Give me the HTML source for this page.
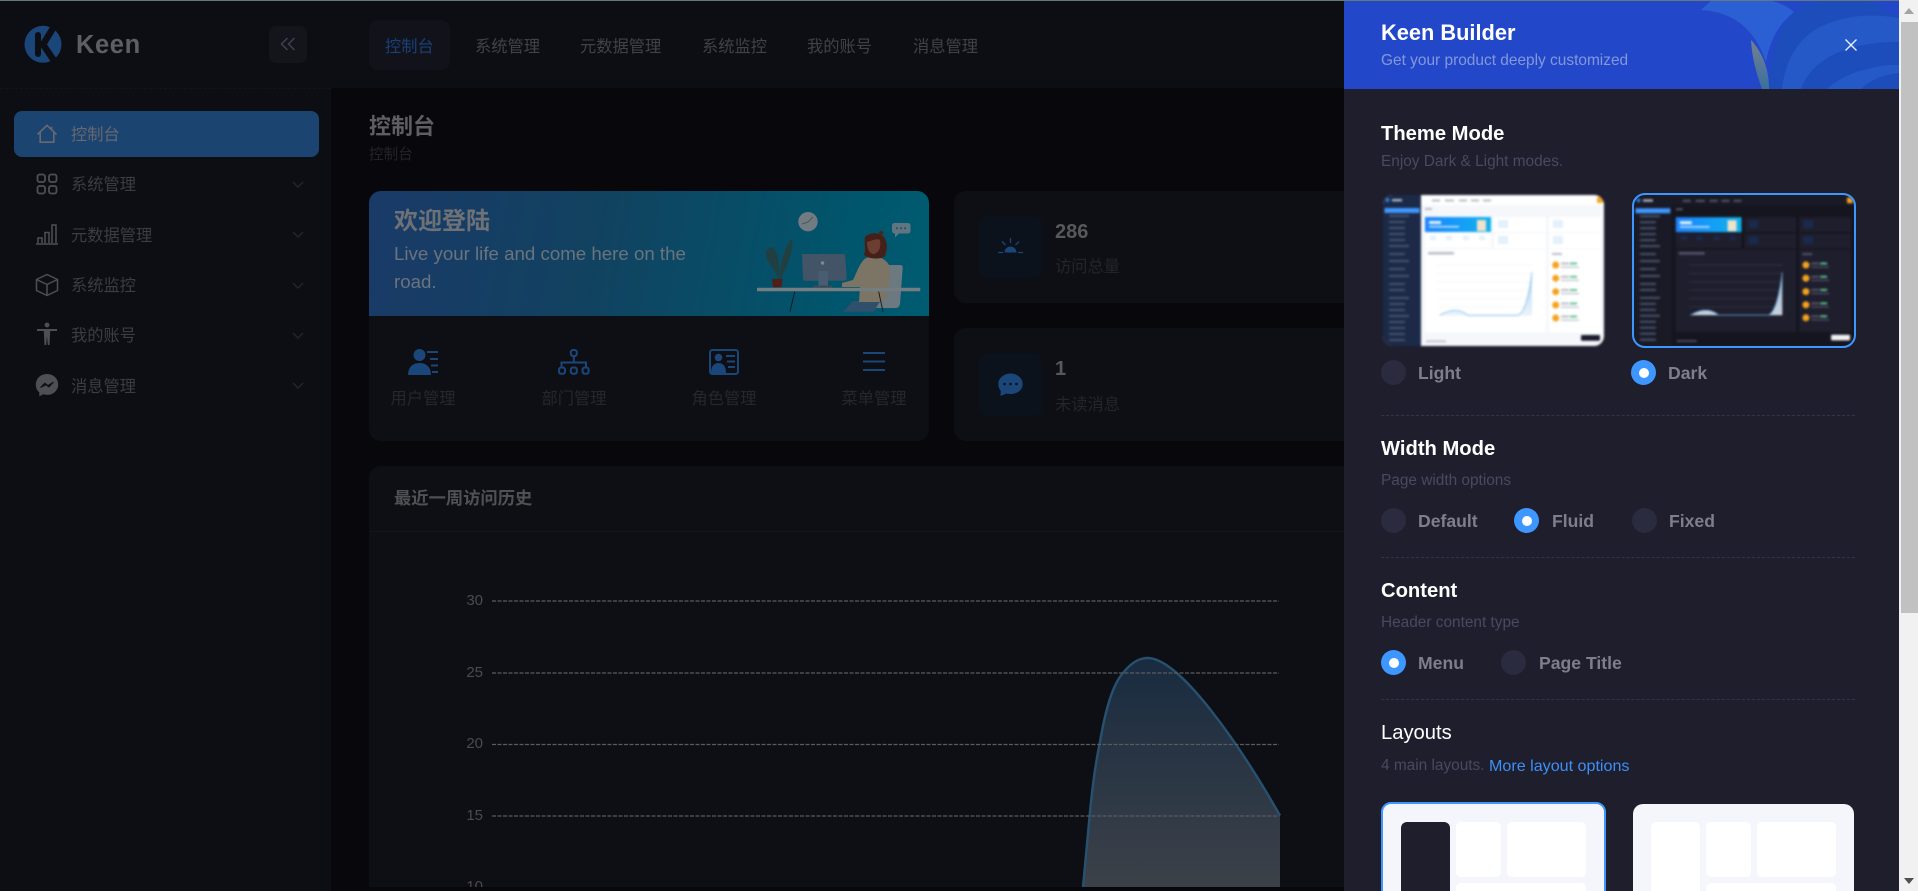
<!DOCTYPE html>
<html lang="zh">
<head>
<meta charset="utf-8">
<title>Keen</title>
<style>
html,body{margin:0;padding:0;width:1918px;height:891px;overflow:hidden;background:#08080c;font-family:"Liberation Sans","Noto Sans CJK SC",sans-serif}
#p{position:absolute;left:0;top:0;width:1918px;height:891px;overflow:hidden}
.b{position:absolute}
.t{position:absolute;white-space:nowrap;line-height:20px;height:20px}
.nav{font-size:16.25px;color:#414246}
.side{font-size:16.25px;color:#3c3d43;left:71px}
.q{font-size:16.25px;color:#26272e;width:100px;text-align:center}
.h{font-size:20.2px;font-weight:700;color:#fff;left:1381px}
.s{font-size:15.4px;color:#494960;left:1381px}
.l{font-size:17.6px;font-weight:700;color:#7f7f8c}
.r{position:absolute;width:25px;height:25px;border-radius:50%;background:#2b2b40}
.r.on{background:#3e97ff}
.r.on:after{content:"";position:absolute;left:7.5px;top:7.5px;width:10px;height:10px;border-radius:50%;background:#fff}
.dv{position:absolute;left:1381px;width:474px;height:0;border-top:1px dashed #33334a}
svg{position:absolute;display:block;overflow:visible}
.thumb{filter:blur(1px)}
</style>
</head>
<body>
<div id="p">
<!-- main bg -->
<div class="b" style="left:331px;top:0;width:1013px;height:891px;background:#08080c"></div>
<!-- sidebar -->
<div class="b" style="left:0;top:0;width:331px;height:891px;background:#0c0e13"></div>
<!-- header -->
<div class="b" style="left:0;top:0;width:1344px;height:88px;background:#0d0e13"></div>
<div class="b" style="left:0;top:88px;width:331px;height:0;border-top:1px dashed #14151a"></div>
<!-- top hairline -->
<div class="b" style="left:0;top:0;width:1918px;height:1px;background:#66787c;z-index:9"></div>

<!-- logo -->
<svg style="left:0;top:0" width="120" height="88" viewBox="0 0 120 88">
<circle cx="43" cy="44.3" r="18.5" fill="#1a4679"/>
<path d="M38 35V54" stroke="#0d0e13" stroke-width="6" stroke-linecap="round"/>
<path d="M55 25L43 44.5L57 65" stroke="#0d0e13" stroke-width="6.5" fill="none" stroke-linejoin="round"/>
</svg>
<div class="t" style="left:76px;top:30px;height:30px;line-height:30px;font-size:25.5px;font-weight:700;color:#5f5f63;letter-spacing:.6px">Keen</div>
<!-- toggle -->
<div class="b" style="left:269px;top:26px;width:38px;height:37px;border-radius:7px;background:#14141b"></div>
<svg style="left:280px;top:36px" width="16" height="16" viewBox="0 0 16 16" fill="none" stroke="#3f4052" stroke-width="1.5"><path d="M7.5 2L1.5 8L7.5 14M14.5 2L8.5 8L14.5 14"/></svg>

<!-- top nav -->
<div class="b" style="left:369px;top:20px;width:81px;height:50px;border-radius:9px;background:#12121a"></div>
<div class="t nav" style="left:385px;top:37px;color:#194078">控制台</div>
<div class="t nav" style="left:475px;top:37px">系统管理</div>
<div class="t nav" style="left:580px;top:37px">元数据管理</div>
<div class="t nav" style="left:702px;top:37px">系统监控</div>
<div class="t nav" style="left:807px;top:37px">我的账号</div>
<div class="t nav" style="left:913px;top:37px">消息管理</div>

<!-- sidebar menu -->
<div class="b" style="left:14px;top:111px;width:305px;height:46px;border-radius:8px;background:#1b4470"></div>
<svg style="left:36px;top:124px" width="22" height="20" viewBox="0 0 24 22" fill="none" stroke="#666a70" stroke-width="1.8"><path d="M1.5 11.5L12 1.5L22.5 11.5M4.5 9.5V20H19.5V9.5M17 3V6.5"/></svg>
<div class="t side" style="top:125px;color:#666970">控制台</div>

<svg style="left:36px;top:173px" width="22" height="22" viewBox="0 0 22 22" fill="none" stroke="#4e4f55" stroke-width="1.8"><rect x="1.5" y="1.5" width="7.5" height="7.5" rx="2"/><rect x="13" y="1.5" width="7.5" height="7.5" rx="2"/><rect x="1.5" y="13" width="7.5" height="7.5" rx="2"/><rect x="13" y="13" width="7.5" height="7.5" rx="2"/></svg>
<div class="t side" style="top:175px">系统管理</div>

<svg style="left:35px;top:223px" width="24" height="22" viewBox="0 0 24 22" fill="none" stroke="#4e4f55" stroke-width="1.5"><path d="M1 21H23M3 20V15H7V20M10 20V9.5H14V20M17 20V2H21V20"/></svg>
<div class="t side" style="top:226px">元数据管理</div>

<svg style="left:35px;top:273px" width="24" height="24" viewBox="0 0 24 24" fill="none" stroke="#4e4f55" stroke-width="1.5" stroke-linejoin="round"><path d="M12 1.5L22.5 6.5V17.5L12 22.5L1.5 17.5V6.5ZM1.5 6.5L12 11.5L22.5 6.5M12 11.5V22.5"/></svg>
<div class="t side" style="top:276px">系统监控</div>

<svg style="left:36px;top:322px" width="22" height="24" viewBox="0 0 22 24"><circle cx="11" cy="3" r="2.4" fill="#4e4f55"/><path d="M1 7H21V9H14.2L13.5 23H11.8L11 14L10.2 23H8.5L7.8 9H1Z" fill="#4e4f55"/></svg>
<div class="t side" style="top:326px">我的账号</div>

<svg style="left:35px;top:373px" width="24" height="24" viewBox="0 0 24 24"><path d="M12 1C5.6 1 .8 5.6.8 11.6c0 3.2 1.3 5.9 3.5 7.8V23.4l3.7-2.1c1.2.4 2.6.6 4 .6 6.4 0 11.2-4.6 11.2-10.3C23.2 5.6 18.4 1 12 1Z" fill="#4e4f55"/><path d="M5.5 14.5L9.8 10.2L13 12.5L18.5 9L14 14L10.8 11.8Z" fill="#101117" stroke="#101117"/></svg>
<div class="t side" style="top:377px">消息管理</div>

<svg style="left:0;top:0;width:331px;height:420px" width="331" height="420" fill="none" stroke="#23252f" stroke-width="1.4"><path d="M293 182l5 5l5-5M293 232l5 5l5-5M293 283l5 5l5-5M293 333l5 5l5-5M293 383l5 5l5-5"/></svg>

<!-- page title -->
<div class="t" style="left:369px;top:117px;font-size:22px;font-weight:700;color:#5f5f63">控制台</div>
<div class="t" style="left:369px;top:145px;font-size:14.6px;color:#23232b">控制台</div>

<!-- welcome card -->
<div class="b" style="left:369px;top:191px;width:560px;height:250px;border-radius:12px;background:#0e0f14"></div>
<div class="b" style="left:369px;top:191px;width:560px;height:125px;border-radius:12px 12px 0 0;background:linear-gradient(100deg,#1a3a68 0%,#114260 40%,#00566c 85%,#005c71 100%)"></div>
<div class="t" style="left:394px;top:212px;font-size:24px;font-weight:700;color:#6e7276">欢迎登陆</div>
<div class="t" style="left:394px;top:240px;height:28px;line-height:28px;font-size:18.7px;color:#6a747e">Live your life and come here on the</div>
<div class="t" style="left:394px;top:268px;height:28px;line-height:28px;font-size:18.7px;color:#6a747e">road.</div>

<!-- illustration -->
<svg style="left:0;top:0" width="1" height="1" viewBox="0 0 1 1">
<circle cx="808" cy="221.7" r="9.7" fill="#717b81"/>
<path d="M808 222L813 217M808 222L802 224" stroke="#3f4c52" stroke-width=".8" fill="none"/>
<path d="M895 223H908a2.5 2.5 0 0 1 2.5 2.5V231a2.5 2.5 0 0 1-2.5 2.5H899L895 237.5V233.5a3 3 0 0 1-3-2.5V225.5A2.5 2.5 0 0 1 895 223Z" fill="#5f7682"/>
<circle cx="897" cy="228.3" r="1" fill="#2f4653"/><circle cx="901" cy="228.3" r="1" fill="#2f4653"/><circle cx="905" cy="228.3" r="1" fill="#2f4653"/>
<path d="M779 280C776 270 766 262 766 254C766 247 772 245 775 250C779 256 780 268 779 280Z" fill="#213f41"/>
<path d="M780 280C779 268 783 252 790 240C792 238 793 242 792 247C791 258 786 268 780 280Z" fill="#213f41"/>
<path d="M772 278.7H782.7L781.5 287.3H773Z" fill="#502018"/>
<path d="M802 254H843Q845 254 845.2 256L846.7 278Q846.7 280.7 844 280.7H805Q803 280.7 803 278Z" fill="#435466"/>
<circle cx="822.5" cy="263" r="1.7" fill="#81888d"/>
<path d="M818.5 271H828V286.5H818.5Z" fill="#4a5c6f"/>
<path d="M813 285.5H832V287.7H813Z" fill="#394a5b"/>
<path d="M889 265H900Q903 265 902.7 268L900 304Q899 308 896 308H870L884 300Z" fill="#6d7980"/>
<path d="M843 311.7L853 301H880L874 311.7Z" fill="#2f4f6b"/>
<path d="M866 258C860 262 857 272 853 280L842 283V287H860L859 302H884C890 290 891 272 889 265C886 259 878 256 872 256Z" fill="#7c7464"/>
<path d="M865 237C871 231 884 232 886 241C888 248 886 252 885 256C881 260 868 259 864 255C866 250 864 245 865 237Z" fill="#452019"/>
<circle cx="881" cy="233" r="2.2" fill="#4f221a"/>
<path d="M867 242C871 241 877 238 880 240C881 246 880 252 874 254C869 254 867 248 867 242Z" fill="#6c3e32"/>
<path d="M757 287.7H920.3V291.3H757Z" fill="#747d81"/>
<path d="M794.7 291.7L790 311.7M878.7 291.7L883 311.7" stroke="#0c161c" stroke-width=".9"/>
</svg>

<!-- quick icons -->
<svg style="left:408px;top:349px" width="32" height="26" viewBox="0 0 32 26" fill="#1a4679"><circle cx="11.5" cy="6" r="6"/><path d="M0 26C0 18 5 14 11.5 14S23 18 23 26Z"/><path d="M19 2H30V4H19ZM22 9H30V11H22ZM23 15.5H30V17.5H23ZM24 22H30V24H24Z"/></svg>
<svg style="left:558px;top:349px" width="32" height="26" viewBox="0 0 32 26" fill="none" stroke="#1a4679" stroke-width="2"><rect x="12.8" y="1" width="6" height="6" rx="2.2"/><path d="M15.8 7V14M3.5 18V13.5H28V18"/><rect x="1" y="18.5" width="6" height="6.3" rx="2.2"/><rect x="12.8" y="18.5" width="6" height="6.3" rx="2.2"/><rect x="24.6" y="18.5" width="6" height="6.3" rx="2.2"/></svg>
<svg style="left:709px;top:349px" width="30" height="26" viewBox="0 0 30 26"><rect x="1" y="1" width="28" height="24" rx="2.5" fill="none" stroke="#1a4679" stroke-width="2"/><circle cx="9.5" cy="8.5" r="3.8" fill="#1a4679"/><path d="M2 24C2 17 5 14 9.5 14S17 17 17 24Z" fill="#1a4679"/><path d="M17 7H26M18 12.5H26M19 18H26" stroke="#1a4679" stroke-width="2"/></svg>
<svg style="left:863px;top:351px" width="22" height="22" viewBox="0 0 22 22" fill="none" stroke="#1a4679" stroke-width="2"><path d="M0 2H22M0 10.5H22M0 19H22"/></svg>
<div class="t q" style="left:373px;top:389px">用户管理</div>
<div class="t q" style="left:524px;top:389px">部门管理</div>
<div class="t q" style="left:674px;top:389px">角色管理</div>
<div class="t q" style="left:824px;top:389px">菜单管理</div>

<!-- stat cards -->
<div class="b" style="left:954px;top:191px;width:420px;height:112px;border-radius:12px;background:#0e0f14"></div>
<div class="b" style="left:954px;top:328px;width:420px;height:113px;border-radius:12px;background:#0e0f14"></div>
<div class="b" style="left:979px;top:216px;width:63px;height:62px;border-radius:8px;background:#0b121b"></div>
<div class="b" style="left:979px;top:353px;width:63px;height:63px;border-radius:8px;background:#0b121b"></div>
<svg style="left:998px;top:238px" width="25" height="16" viewBox="0 0 25 16" fill="none" stroke="#1a4679" stroke-width="1.3"><path d="M12.5 0V5M4 3.5L7.5 7M21 3.5L17.5 7M0 14.5H5M20 14.5H25"/><path d="M6.5 14.5A6 6 0 0 1 18.5 14.5Z" fill="#1a4679" stroke="none"/></svg>
<svg style="left:998px;top:373px" width="25" height="24" viewBox="0 0 25 24"><path d="M12.5 0.5C19 0.5 24.7 4.8 24.7 11C24.7 17.2 19 21 12.5 21C11 21 9.8 20.8 8.5 20.5L2.5 23L2.8 18C1 16 .3 13.6 .3 11C.3 4.8 6 0.5 12.5 .5Z" fill="#1a4679"/><circle cx="6.5" cy="11" r="1.3" fill="#0b121b"/><circle cx="12.5" cy="11" r="1.3" fill="#0b121b"/><circle cx="18.5" cy="11" r="1.3" fill="#0b121b"/></svg>
<div class="t" style="left:1055px;top:222px;font-size:20px;font-weight:700;color:#57575c">286</div>
<div class="t" style="left:1055px;top:257px;font-size:16.25px;color:#24252c">访问总量</div>
<div class="t" style="left:1055px;top:359px;font-size:20px;font-weight:700;color:#57575c">1</div>
<div class="t" style="left:1055px;top:395px;font-size:16.25px;color:#24252c">未读消息</div>

<!-- chart card -->
<div class="b" style="left:369px;top:466px;width:1000px;height:425px;border-radius:12px 12px 0 0;background:#0e0f14"></div>
<div class="b" style="left:369px;top:531px;width:1000px;height:1px;background:#14151b"></div>
<div class="t" style="left:394px;top:488px;font-size:17.3px;font-weight:700;color:#505155">最近一周访问历史</div>

<svg style="left:0;top:0" width="1" height="1">
<defs><linearGradient id="gf" x1="0" y1="658" x2="0" y2="887" gradientUnits="userSpaceOnUse"><stop offset="0" stop-color="#192b40"/><stop offset="1" stop-color="#3c4149"/></linearGradient></defs>
<path d="M1083 887C1085.5 862 1087.5 838 1089.6 816C1092 790 1094.5 768 1099.6 744C1105 712 1112 685 1123 673C1130 664 1138 658 1147.5 658C1180 658 1240 745 1280 815.5V887Z" fill="url(#gf)"/>
<path d="M1083 887C1085.5 862 1087.5 838 1089.6 816C1092 790 1094.5 768 1099.6 744C1105 712 1112 685 1123 673C1130 664 1138 658 1147.5 658C1180 658 1240 745 1280 815.5" fill="none" stroke="#27516f" stroke-width="2.4"/>
<g stroke="#5a5b60" stroke-width="1.3" stroke-dasharray="4 1.5"><path d="M492 601H1279M492 673H1279M492 744.5H1279M492 816H1279"/></g>
</svg>
<div class="t" style="left:461px;top:591px;width:22px;text-align:right;font-size:15px;color:#4a4a50">30</div>
<div class="t" style="left:461px;top:663px;width:22px;text-align:right;font-size:15px;color:#4a4a50">25</div>
<div class="t" style="left:461px;top:734px;width:22px;text-align:right;font-size:15px;color:#4a4a50">20</div>
<div class="t" style="left:461px;top:806px;width:22px;text-align:right;font-size:15px;color:#4a4a50">15</div>
<div class="t" style="left:461px;top:877px;width:22px;text-align:right;font-size:15px;color:#4a4a50">10</div>
<div class="b" style="left:331px;top:887px;width:1013px;height:4px;background:#08080c"></div>

<!-- drawer -->
<div class="b" style="left:1344px;top:0;width:555px;height:891px;background:#1e1e2d"></div>
<div class="b" style="left:1344px;top:1px;width:555px;height:88px;overflow:hidden;background:#2248c9">
<svg style="left:-1344px;top:-1px" width="1899" height="89" viewBox="0 0 1899 89">
<defs><linearGradient id="lf" x1="0" y1="0" x2="0" y2="1"><stop offset="0" stop-color="#75808f"/><stop offset="1" stop-color="#3a6fa0"/></linearGradient></defs>
<path d="M1769 89C1770 55 1778 28 1795 12C1806 2 1840 -5 1870 1L1899 18V89Z" fill="#1d4cbb"/>
<path d="M1782 89C1785 62 1797 38 1822 26C1848 14 1875 14 1899 18V42C1860 42 1815 52 1801 89Z" fill="#2559c8"/>
<path d="M1827 89C1840 76 1870 64 1899 65V42C1860 42 1815 52 1801 89Z" fill="#1d4cbb"/>
<path d="M1861 89C1870 80 1885 74 1899 73V65C1870 64 1840 76 1827 89Z" fill="#2559c8"/>
<path d="M1701 10C1735 12 1755 30 1766 62C1770 40 1778 25 1794 12C1785 4 1772 0 1760 -1H1713C1709 3 1705 6 1701 10Z" fill="#2a60d4"/>
<path d="M1751 40C1762 52 1769 68 1769 89H1762C1756 72 1752 58 1751 40Z" fill="url(#lf)"/>
</svg>
</div>
<div class="t" style="left:1381px;top:23px;font-size:21.8px;font-weight:700;color:#fff">Keen Builder</div>
<div class="t" style="left:1381px;top:51px;font-size:15.45px;color:#8597db">Get your product deeply customized</div>
<svg style="left:1845px;top:39px" width="12" height="12" viewBox="0 0 12 12" stroke="#e8ecfb" stroke-width="1.4"><path d="M.5 .5L11.5 11.5M11.5 .5L.5 11.5"/></svg>

<div class="t h" style="top:124px">Theme Mode</div>
<div class="t s" style="top:152px">Enjoy Dark &amp; Light modes.</div>

<!-- thumbnails -->
<svg width="0" height="0" style="left:0;top:0">
<defs>
<symbol id="th" viewBox="0 0 221 151">
<clipPath id="tc"><rect width="221" height="151" rx="10"/></clipPath>
<g clip-path="url(#tc)">
<rect width="221" height="151" style="fill:var(--bg)"/>
<rect width="221" height="10" style="fill:var(--top)"/>
<rect width="38" height="151" style="fill:var(--sb)"/>
<rect x="1.5" y="13" width="35" height="5" fill="#3e97ff"/>
<circle cx="4.5" cy="5" r="2" fill="#2a7fe0"/><rect x="9" y="4" width="10" height="2.4" fill="#aab3c5"/>
<g fill="#47546e"><rect x="6" y="20" width="20" height="2"/><rect x="6" y="26" width="16" height="2"/><rect x="6" y="32" width="16" height="2"/><rect x="6" y="38" width="16" height="2"/><rect x="6" y="44" width="16" height="2"/><rect x="6" y="50" width="20" height="2"/><rect x="6" y="58" width="16" height="2"/><rect x="6" y="65" width="20" height="2"/><rect x="6" y="73" width="16" height="2"/><rect x="6" y="80" width="20" height="2"/><rect x="6" y="88" width="16" height="2"/><rect x="6" y="94" width="16" height="2"/><rect x="6" y="102" width="20" height="2"/><rect x="6" y="108" width="16" height="2"/><rect x="6" y="114" width="16" height="2"/><rect x="6" y="120" width="20" height="2"/><rect x="6" y="126" width="16" height="2"/><rect x="6" y="132" width="16" height="2"/><rect x="6" y="138" width="16" height="2"/><rect x="6" y="144" width="16" height="2"/></g>
<g style="fill:var(--tx)"><rect x="49" y="4.5" width="8" height="2"/><rect x="62" y="4.5" width="9" height="2"/><rect x="76" y="4.5" width="8" height="2"/><rect x="88" y="4.5" width="8" height="2"/><rect x="100" y="4.5" width="8" height="2"/></g>
<rect x="42" y="13" width="7" height="2" style="fill:var(--tx)"/>
<rect x="214" y="2" width="6" height="6" rx="1" fill="#f5a31c"/>
<g style="fill:var(--card)"><rect x="111" y="22" width="52" height="15"/><rect x="166" y="22" width="52" height="15"/><rect x="111" y="38.5" width="52" height="15"/><rect x="166" y="38.5" width="52" height="15"/><rect x="42" y="38" width="66" height="15"/><rect x="42" y="54.5" width="121" height="83"/><rect x="166" y="54.5" width="52" height="83"/></g>
<defs><linearGradient id="tb" x1="0" x2="1" y1="0" y2="0"><stop offset="0" stop-color="#1b84ff"/><stop offset="1" stop-color="#10b3ee"/></linearGradient><linearGradient id="tl" x1="0" x2="0" y1="0" y2="1"><stop offset="0" stop-color="#a9cfee"/><stop offset="1" stop-color="#e8f2fb"/></linearGradient></defs>
<rect x="42" y="22" width="66" height="15" fill="url(#tb)"/>
<rect x="46" y="26" width="12" height="3" fill="#e6f3ff"/><rect x="46" y="31" width="30" height="1.5" fill="#cfe6fb"/><rect x="94" y="25" width="9" height="11" fill="#f1e2c8"/>
<g style="fill:var(--sub)"><rect x="115" y="25" width="10" height="8" rx="1"/><rect x="170" y="25" width="10" height="8" rx="1"/><rect x="115" y="41" width="10" height="8" rx="1"/><rect x="170" y="41" width="10" height="8" rx="1"/><rect x="47" y="41" width="6" height="4"/><rect x="63" y="41" width="6" height="4"/><rect x="80" y="41" width="6" height="4"/><rect x="96" y="41" width="6" height="4"/></g>
<g style="stroke:var(--grid)" stroke-width=".7"><path d="M55 70H149M55 78.3H149M55 87H149M55 95.3H149M55 103.7H149M55 112H149M55 120.3H149"/></g>
<path d="M57 120.3Q65 115.5 72 115.5T85 120.3H135Q144 117 149 77.3V120.3Z" fill="url(#tl)" style="opacity:var(--op)"/>
<path d="M57 120.3Q65 115.5 72 115.5T85 120.3H135Q144 117 149 77.3" fill="none" stroke="#6fb6ee" stroke-width=".8"/>
<rect x="45" y="57" width="26" height="2.5" style="fill:var(--tx)"/><rect x="169" y="58" width="10" height="2" style="fill:var(--tx)"/>
<g fill="#f5a31c"><circle cx="172.7" cy="70" r="3.5"/><circle cx="172.7" cy="83.3" r="3.5"/><circle cx="172.7" cy="96.7" r="3.5"/><circle cx="172.7" cy="110" r="3.5"/><circle cx="172.7" cy="123" r="3.5"/></g>
<g style="fill:var(--tx)"><rect x="178" y="67.5" width="8" height="2"/><rect x="178" y="80.8" width="8" height="2"/><rect x="178" y="94" width="8" height="2"/><rect x="178" y="107.5" width="8" height="2"/><rect x="178" y="120.5" width="8" height="2"/><rect x="178" y="71.5" width="18" height="1.2"/><rect x="178" y="84.8" width="18" height="1.2"/><rect x="178" y="98" width="18" height="1.2"/><rect x="178" y="111.5" width="18" height="1.2"/><rect x="178" y="124.5" width="18" height="1.2"/></g>
<g fill="#5fc28d"><rect x="187" y="67.5" width="7" height="2"/><rect x="187" y="80.8" width="7" height="2"/><rect x="187" y="94" width="7" height="2"/><rect x="187" y="107.5" width="7" height="2"/><rect x="187" y="120.5" width="7" height="2"/></g>
<rect x="198" y="140" width="19" height="5.7" rx="1" style="fill:var(--btn)"/>
<rect x="43" y="145.5" width="20" height="1.6" style="fill:var(--tx)"/>
</g>
</symbol>
</defs>
</svg>
<svg class="thumb" style="left:1383px;top:195px;--bg:#f5f7fa;--top:#fff;--tx:#b9bcc7;--card:#fff;--sub:#e4f0fb;--grid:#eef0f4;--btn:#191b2b;--op:.9;--sb:#1c2a48" width="221" height="151"><use href="#th"/></svg>
<svg class="thumb" style="left:1634px;top:195px;--bg:#15151f;--top:#1a1a26;--tx:#54556a;--card:#1e1e2d;--sub:#1a2a4c;--grid:#3a3b4b;--btn:#f2f2f4;--op:.85;--sb:#1a1a26" width="220" height="151"><use href="#th"/></svg>
<div class="b" style="left:1632px;top:193px;width:220px;height:151px;border:2px solid #3e97ff;border-radius:13px"></div>

<div class="r" style="left:1381px;top:360px"></div>
<div class="t l" style="left:1418px;top:363px">Light</div>
<div class="r on" style="left:1631px;top:360px"></div>
<div class="t l" style="left:1668px;top:363px">Dark</div>
<div class="dv" style="top:415px"></div>

<div class="t h" style="top:439px">Width Mode</div>
<div class="t s" style="top:471px">Page width options</div>
<div class="r" style="left:1381px;top:508px"></div>
<div class="t l" style="left:1418px;top:511px">Default</div>
<div class="r on" style="left:1514px;top:508px"></div>
<div class="t l" style="left:1552px;top:511px">Fluid</div>
<div class="r" style="left:1632px;top:508px"></div>
<div class="t l" style="left:1669px;top:511px">Fixed</div>
<div class="dv" style="top:557px"></div>

<div class="t h" style="top:581px">Content</div>
<div class="t s" style="top:613px">Header content type</div>
<div class="r on" style="left:1381px;top:650px"></div>
<div class="t l" style="left:1418px;top:653px">Menu</div>
<div class="r" style="left:1501px;top:650px"></div>
<div class="t l" style="left:1539px;top:653px">Page Title</div>
<div class="dv" style="top:699px"></div>

<div class="t h" style="top:723px;font-weight:400">Layouts</div>
<div class="t s" style="top:756px">4 main layouts.</div>
<div class="t" style="left:1489px;top:756px;font-size:16.1px;color:#3e8ff5">More layout options</div>

<div class="b" style="left:1381px;top:802px;width:221px;height:100px;border:2px solid #3e97ff;border-radius:10px;background:#f4f6fb"></div>
<div class="b" style="left:1401px;top:822px;width:49px;height:80px;border-radius:6px;background:#1e1e2d"></div>
<div class="b" style="left:1456px;top:822px;width:45px;height:55px;border-radius:5px;background:#fff"></div>
<div class="b" style="left:1507px;top:822px;width:79px;height:55px;border-radius:5px;background:#fff"></div>
<div class="b" style="left:1456px;top:883px;width:130px;height:20px;border-radius:5px;background:#fff"></div>

<div class="b" style="left:1633px;top:804px;width:221px;height:100px;border-radius:10px;background:#f4f6fb"></div>
<div class="b" style="left:1651px;top:822px;width:49px;height:80px;border-radius:6px;background:#fff"></div>
<div class="b" style="left:1706px;top:822px;width:45px;height:55px;border-radius:5px;background:#fff"></div>
<div class="b" style="left:1757px;top:822px;width:79px;height:55px;border-radius:5px;background:#fff"></div>
<div class="b" style="left:1706px;top:883px;width:130px;height:20px;border-radius:5px;background:#fff"></div>

<!-- scrollbar -->
<div class="b" style="left:1899px;top:0;width:19px;height:891px;background:#f1f1f1;z-index:10"></div>
<div class="b" style="left:1901px;top:22px;width:17px;height:591px;background:#c1c1c1;z-index:11"></div>
<svg style="left:1904px;top:8px;z-index:11" width="10" height="6"><path d="M5 0L10 6H0Z" fill="#a3a3a3"/></svg>
<svg style="left:1904px;top:878px;z-index:11" width="10" height="6"><path d="M5 6L10 0H0Z" fill="#505050"/></svg>
</div>
</body>
</html>
